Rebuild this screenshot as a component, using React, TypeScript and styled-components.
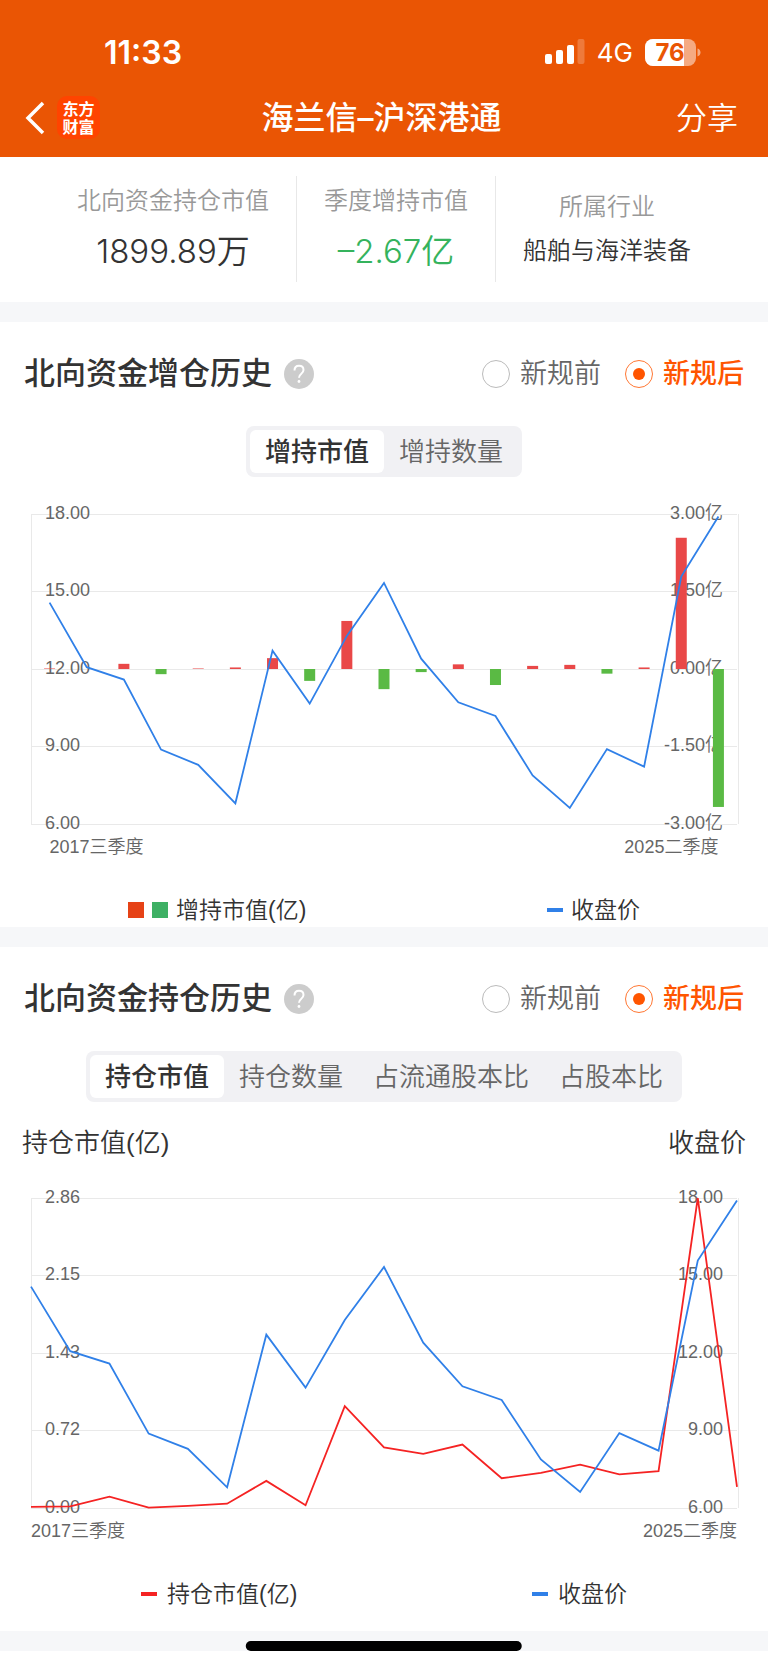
import React, { useId, useState } from 'react';
import styled, { createGlobalStyle } from 'styled-components';

const GlobalStyle = createGlobalStyle`
  *, *::before, *::after { box-sizing: border-box; }
  body {
    margin: 0;
    background: #fff;
    color: #333;
    font-family: "Liberation Sans", "Noto Sans CJK SC", sans-serif;
  }
  button, input { font: inherit; }
`;

const latin = '"Inter", "Noto Sans CJK SC", sans-serif';

/* ---------- header ---------- */

const Header = styled.header`
  background: #ea5504;
  color: #fff;
  font-family: ${latin};
`;

const StatusBar = styled.div`
  display: flex;
  align-items: center;
  justify-content: space-between;
  height: 78px;
  padding: 27px 67px 0 104px;
`;

const Clock = styled.time`
  font-size: 32px;
  font-weight: 600;
  line-height: 40px;
`;

const StatusIcons = styled.div`
  display: flex;
  align-items: center;
  gap: 12px;
`;

const Network = styled.span`
  font-size: 26px;
  line-height: 32px;
`;

const NavBar = styled.nav`
  display: grid;
  grid-template-columns: 1fr auto 1fr;
  align-items: center;
  height: 79px;
  padding: 0 30px 0 25px;
`;

const NavStart = styled.div`
  display: flex;
  align-items: center;
  gap: 12px;
`;

const PlainButton = styled.button`
  display: inline-flex;
  padding: 0;
  border: 0;
  background: none;
  color: inherit;
  cursor: pointer;
`;

const ShareButton = styled(PlainButton)`
  justify-self: end;
  font-size: 31px;
  font-weight: 350;
  line-height: 40px;
`;

const Logo = styled.span`
  display: grid;
  place-content: center;
  width: 43px;
  height: 43px;
  border-radius: 10px;
  background: #ff4400;
  font-size: 16px;
  font-weight: 700;
  line-height: 18px;
  text-align: center;
`;

const PageTitle = styled.h1`
  margin: 0;
  font-size: 32px;
  font-weight: 500;
  line-height: 40px;
`;

/* ---------- summary ---------- */

const Summary = styled.dl`
  display: flex;
  justify-content: center;
  margin: 0;
  padding: 19px 0 20px;
`;

const Metric = styled.div`
  display: flex;
  flex-direction: column;
  justify-content: center;
  gap: 12px;
  height: 106px;
  padding: 0 27px;
  text-align: center;

  & + & { border-left: 1px solid #e8e8e8; }
`;

const MetricLabel = styled.dt`
  color: #999;
  font-size: 24px;
  font-weight: 350;
  line-height: 32px;
`;

const MetricValue = styled.dd<{ $large?: boolean; $down?: boolean }>`
  margin: 0;
  color: ${(p) => (p.$down ? '#35b35d' : '#333')};
  font-family: ${latin};
  font-size: ${(p) => (p.$large ? 33 : 24)}px;
  font-weight: 350;
  line-height: ${(p) => (p.$large ? 44 : 32)}px;
`;

const Band = styled.div`
  height: 20px;
  background: #f6f7f9;
`;

/* ---------- sections ---------- */

const Section = styled.section<{ $last?: boolean }>`
  padding: 32px 0 ${(p) => (p.$last ? 20 : 0)}px;
`;

const SectionHead = styled.div`
  display: flex;
  align-items: center;
  justify-content: space-between;
  height: 40px;
  padding: 0 24px;
`;

const TitleGroup = styled.div`
  display: flex;
  align-items: center;
  gap: 12px;
`;

const SectionTitle = styled.h2`
  margin: 0;
  font-size: 31px;
  font-weight: 500;
  line-height: 40px;
`;

const RadioGroup = styled.fieldset`
  display: flex;
  gap: 24px;
  margin: 0;
  padding: 0;
  border: 0;
`;

const RadioLabel = styled.label<{ $checked: boolean }>`
  display: flex;
  align-items: center;
  gap: 10px;
  color: ${(p) => (p.$checked ? '#ff5500' : '#666')};
  font-size: 27px;
  font-weight: ${(p) => (p.$checked ? 500 : 350)};
  line-height: 40px;
  cursor: pointer;
`;

const RadioInput = styled.input`
  appearance: none;
  display: grid;
  place-content: center;
  width: 28px;
  height: 28px;
  margin: 0;
  border: 1px solid #bbb;
  border-radius: 50%;
  background: #fff;

  &:checked { border-color: #ff7733; }
  &:checked::before {
    content: "";
    width: 12px;
    height: 12px;
    border-radius: 50%;
    background: #ff5500;
  }
`;

const TabList = styled.div`
  display: flex;
  width: fit-content;
  margin: 32px auto 0;
  padding: 4px;
  border-radius: 8px;
  background: #f1f1f4;
`;

const Tab = styled.button<{ $active: boolean }>`
  padding: 1px 15px 0;
  border: 0;
  border-radius: 6px;
  background: ${(p) => (p.$active ? '#fff' : 'transparent')};
  color: ${(p) => (p.$active ? '#333' : '#666')};
  font-size: 26px;
  font-weight: ${(p) => (p.$active ? 500 : 350)};
  line-height: 42px;
  cursor: pointer;
`;

const AxisTitles = styled.div`
  display: flex;
  justify-content: space-between;
  margin-top: 24px;
  padding: 0 22px;
  font-size: 26px;
  font-weight: 350;
  line-height: 35px;
`;

const ChartSvg = styled.svg`
  display: block;
  width: 100%;
  height: auto;
`;

const AxisText = styled.text`
  fill: #666;
  font-size: 18px;
  font-weight: 350;
`;

const Legend = styled.div<{ $inset: number; $gap: number }>`
  display: flex;
  justify-content: space-between;
  margin-top: 28px;
  padding: 0 ${(p) => p.$inset}px;
  font-size: 23px;
  font-weight: 350;
  line-height: 34px;

  & > span {
    display: flex;
    align-items: center;
    gap: ${(p) => p.$gap}px;
  }
`;

const Swatch = styled.i<{ $color: string; $line?: boolean }>`
  width: 16px;
  height: ${(p) => (p.$line ? 4 : 16)}px;
  background: ${(p) => p.$color};
`;

const Footer = styled.footer`
  position: relative;
  height: 34px;
`;

const HomeIndicator = styled.div`
  position: absolute;
  bottom: 14px;
  left: 50%;
  width: 36%;
  height: 10px;
  border-radius: 5px;
  background: #000;
  transform: translateX(-50%);
`;

/* ---------- data ---------- */

const price = [
  14.57, 12.07, 11.59, 8.88, 8.29, 6.8, 12.71, 10.66, 13.28, 15.33,
  12.4, 10.71, 10.18, 7.88, 6.62, 8.9, 8.22, 15.58, 17.9,
];
const increase = [
  0.01, 0, 0.1, -0.1, 0.01, 0.03, 0.21, -0.23, 0.93, -0.39,
  -0.06, 0.09, -0.31, 0.06, 0.08, -0.09, 0.03, 2.54, -2.67,
];
const holding = [
  0.01, 0.015, 0.105, 0.003, 0.02, 0.04, 0.25, 0.025, 0.94, 0.56,
  0.5, 0.585, 0.275, 0.325, 0.4, 0.31, 0.34, 2.86, 0.195,
];

/* ---------- chart ---------- */

const LEFT = 31;
const RIGHT = 737;
const TOP = 37;
const BOTTOM = 347;

const scaleY = (v: number, min: number, max: number) =>
  BOTTOM - ((v - min) / (max - min)) * (BOTTOM - TOP);

type ChartProps = {
  label: string;
  leftTicks: string[];
  rightTicks: string[];
  banded?: boolean;
  bars?: number[];
  line?: number[];
};

function Chart({ label, leftTicks, rightTicks, banded, bars, line }: ChartProps) {
  const count = price.length;
  const step = (RIGHT - LEFT) / (banded ? count : count - 1);
  const x = (i: number) => LEFT + step * (banded ? i + 0.5 : i);
  const path = (data: number[], min: number, max: number) =>
    data.map((v, i) => `${x(i)},${scaleY(v, min, max)}`).join(' ');
  const tickY = (i: number) => Math.floor(TOP + (i * (BOTTOM - TOP)) / 4);

  return (
    <ChartSvg viewBox="0 0 768 388" role="img" aria-label={label}>
      <g stroke="#e9e9e9" shapeRendering="crispEdges">
        {leftTicks.map((t, i) => (
          <line key={t} x1={LEFT} x2={RIGHT} y1={tickY(i)} y2={tickY(i)} />
        ))}
        <line x1={LEFT} x2={LEFT} y1={TOP} y2={BOTTOM} />
        <line x1={RIGHT + 1} x2={RIGHT + 1} y1={TOP} y2={BOTTOM} />
      </g>
      {leftTicks.map((t, i) => (
        <AxisText key={t} x={45} y={tickY(i) + 5}>{t}</AxisText>
      ))}
      {rightTicks.map((t, i) => (
        <AxisText key={t} x={723} y={tickY(i) + 5} textAnchor="end">{t}</AxisText>
      ))}
      <AxisText x={x(0)} y={BOTTOM + 29}>2017三季度</AxisText>
      <AxisText x={x(count - 1)} y={BOTTOM + 29} textAnchor="end">2025二季度</AxisText>
      {bars?.map((v, i) => {
        const zero = scaleY(0, -3, 3);
        const y = scaleY(v, -3, 3);
        return (
          <rect
            key={i}
            x={x(i) - 5.5}
            y={Math.min(y, zero)}
            width={11}
            height={Math.abs(y - zero)}
            fill={v > 0 ? '#e94848' : '#5aba44'}
          />
        );
      })}
      {line && (
        <polyline points={path(line, 0, 2.86)} fill="none" stroke="#f52323" strokeWidth={1.8} />
      )}
      <polyline points={path(price, 6, 18)} fill="none" stroke="#3080e8" strokeWidth={1.8} />
    </ChartSvg>
  );
}

/* ---------- parts ---------- */

function RulePicker() {
  const name = useId();
  const [value, setValue] = useState('新规后');
  return (
    <RadioGroup aria-label="统计口径">
      {['新规前', '新规后'].map((option) => (
        <RadioLabel key={option} $checked={value === option}>
          <RadioInput
            type="radio"
            name={name}
            checked={value === option}
            onChange={() => setValue(option)}
          />
          {option}
        </RadioLabel>
      ))}
    </RadioGroup>
  );
}

function Tabs({ items }: { items: string[] }) {
  const [active, setActive] = useState(items[0]);
  return (
    <TabList role="tablist">
      {items.map((item) => (
        <Tab
          key={item}
          type="button"
          role="tab"
          aria-selected={item === active}
          $active={item === active}
          onClick={() => setActive(item)}
        >
          {item}
        </Tab>
      ))}
    </TabList>
  );
}

function Heading({ title }: { title: string }) {
  return (
    <SectionHead>
      <TitleGroup>
        <SectionTitle>{title}</SectionTitle>
        <PlainButton type="button" aria-label="说明">
          <svg width="30" height="30" viewBox="0 0 30 30" fill="none">
            <circle cx="15" cy="15" r="15" fill="#ccc" />
            <path
              d="M10.500 11.600c0-3 1.800-4.800 4.500-4.800s4.500 1.800 4.500 4.200c0 1.900-1 2.900-2.400 4-1.500 1.200-2.100 1.900-2.100 3.800"
              stroke="#fff"
              strokeWidth="2"
            />
            <circle cx="15" cy="22.500" r="1.400" fill="#fff" />
          </svg>
        </PlainButton>
      </TitleGroup>
      <RulePicker />
    </SectionHead>
  );
}

function SignalIcon() {
  return (
    <svg width="40" height="28" viewBox="0 0 40 28" fill="#fff" aria-hidden="true">
      <rect x="0" y="15" width="7" height="10" rx="2" />
      <rect x="11" y="11" width="7" height="14" rx="2" />
      <rect x="22" y="6" width="7" height="19" rx="2" />
      <rect x="32.500" y="0" width="7" height="25" rx="2" opacity="0.22" />
    </svg>
  );
}

function BatteryIcon() {
  return (
    <svg width="56" height="27" viewBox="0 0 56 27" role="img" aria-label="电量 76%">
      <rect width="51" height="27" rx="8" fill="#fff" opacity="0.5" />
      <path d="M8 0H39V27H8A8 8 0 0 1 0 19V8A8 8 0 0 1 8 0Z" fill="#fff" />
      <path d="M52.500 9.500c2 .6 3 2.200 3 4s-1 3.400-3 4z" fill="#fff" opacity="0.5" />
      <text x="25" y="22" textAnchor="middle" fill="#ea5504" fontSize="24" fontWeight="700">
        76
      </text>
    </svg>
  );
}

export default function App() {
  return (
    <>
      <GlobalStyle />
      <Header>
        <StatusBar>
          <Clock>11:33</Clock>
          <StatusIcons>
            <SignalIcon />
            <Network>4G</Network>
            <BatteryIcon />
          </StatusIcons>
        </StatusBar>
        <NavBar>
          <NavStart>
            <PlainButton type="button" aria-label="返回">
              <svg width="20" height="34" viewBox="0 0 20 34" fill="none">
                <path d="M18 2 3 17l15 15" stroke="#fff" strokeWidth="3.500" />
              </svg>
            </PlainButton>
            <Logo>
              东方
              <br />
              财富
            </Logo>
          </NavStart>
          <PageTitle>海兰信–沪深港通</PageTitle>
          <ShareButton type="button">分享</ShareButton>
        </NavBar>
      </Header>

      <main>
        <Summary>
          <Metric>
            <MetricLabel>北向资金持仓市值</MetricLabel>
            <MetricValue $large>1899.89万</MetricValue>
          </Metric>
          <Metric>
            <MetricLabel>季度增持市值</MetricLabel>
            <MetricValue $large $down>–2.67亿</MetricValue>
          </Metric>
          <Metric>
            <MetricLabel>所属行业</MetricLabel>
            <MetricValue>船舶与海洋装备</MetricValue>
          </Metric>
        </Summary>
        <Band />

        <Section>
          <Heading title="北向资金增仓历史" />
          <Tabs items={['增持市值', '增持数量']} />
          <Chart
            label="北向资金增仓历史"
            banded
            leftTicks={['18.00', '15.00', '12.00', '9.00', '6.00']}
            rightTicks={['3.00亿', '1.50亿', '0.00亿', '-1.50亿', '-3.00亿']}
            bars={increase}
          />
          <Legend $inset={128} $gap={8}>
            <span>
              <Swatch $color="#e64216" />
              <Swatch $color="#3eb064" />
              增持市值(亿)
            </span>
            <span>
              <Swatch $color="#3080e8" $line />
              收盘价
            </span>
          </Legend>
        </Section>
        <Band />

        <Section $last>
          <Heading title="北向资金持仓历史" />
          <Tabs items={['持仓市值', '持仓数量', '占流通股本比', '占股本比']} />
          <AxisTitles>
            <span>持仓市值(亿)</span>
            <span>收盘价</span>
          </AxisTitles>
          <Chart
            label="北向资金持仓历史"
            leftTicks={['2.86', '2.15', '1.43', '0.72', '0.00']}
            rightTicks={['18.00', '15.00', '12.00', '9.00', '6.00']}
            line={holding}
          />
          <Legend $inset={141} $gap={10}>
            <span>
              <Swatch $color="#f52323" $line />
              持仓市值(亿)
            </span>
            <span>
              <Swatch $color="#3080e8" $line />
              收盘价
            </span>
          </Legend>
        </Section>
      </main>

      <Footer>
        <Band />
        <HomeIndicator />
      </Footer>
    </>
  );
}
